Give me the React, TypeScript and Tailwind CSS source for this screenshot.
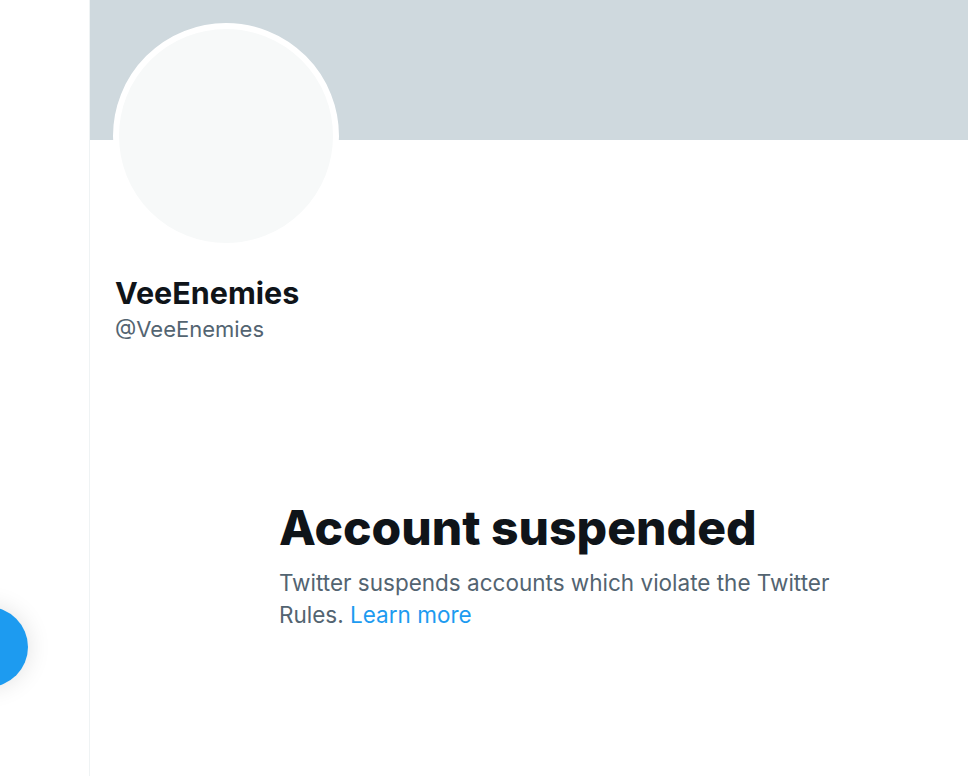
export default function App() {
  return (
    <div className="relative flex h-[776px] w-[968px] overflow-hidden bg-white font-['Inter',sans-serif]">
      <aside className="w-[90px] shrink-0 border-r border-[#eff3f4]" />
      <button className="absolute left-[-52px] top-[607px] h-[80px] w-[80px] rounded-full bg-[#1d9bf0] shadow-[0_0_24px_rgba(0,0,0,0.12)]" />

      <main className="flex flex-1 flex-col">
        <div className="h-[140px] bg-[#cfd9de]" />
        <div className="px-[23px]">
          <div className="-mt-[117px] h-[226px] w-[226px] rounded-full border-[6px] border-white bg-[#f7f9f9]" />
        </div>
        <div className="mt-[26px] px-[25px]">
          <h2 className="text-[30.5px] font-bold leading-[36px] text-[#0f1419]">VeeEnemies</h2>
          <div className="mt-[4px] text-[22px] leading-[28px] text-[#536471]">@VeeEnemies</div>
        </div>

        <div className="ml-[189px] mt-[157px] w-[580px]">
          <h1 className="text-[48px] font-extrabold leading-[56px] text-[#0f1419]">Account suspended</h1>
          <p className="mt-[11px] text-[22.5px] leading-[32px] text-[#536471]">
            Twitter suspends accounts which violate the Twitter
            <br />
            Rules.{" "}
            <a href="#" className="text-[#1d9bf0]">Learn more</a>
          </p>
        </div>
      </main>
    </div>
  );
}
